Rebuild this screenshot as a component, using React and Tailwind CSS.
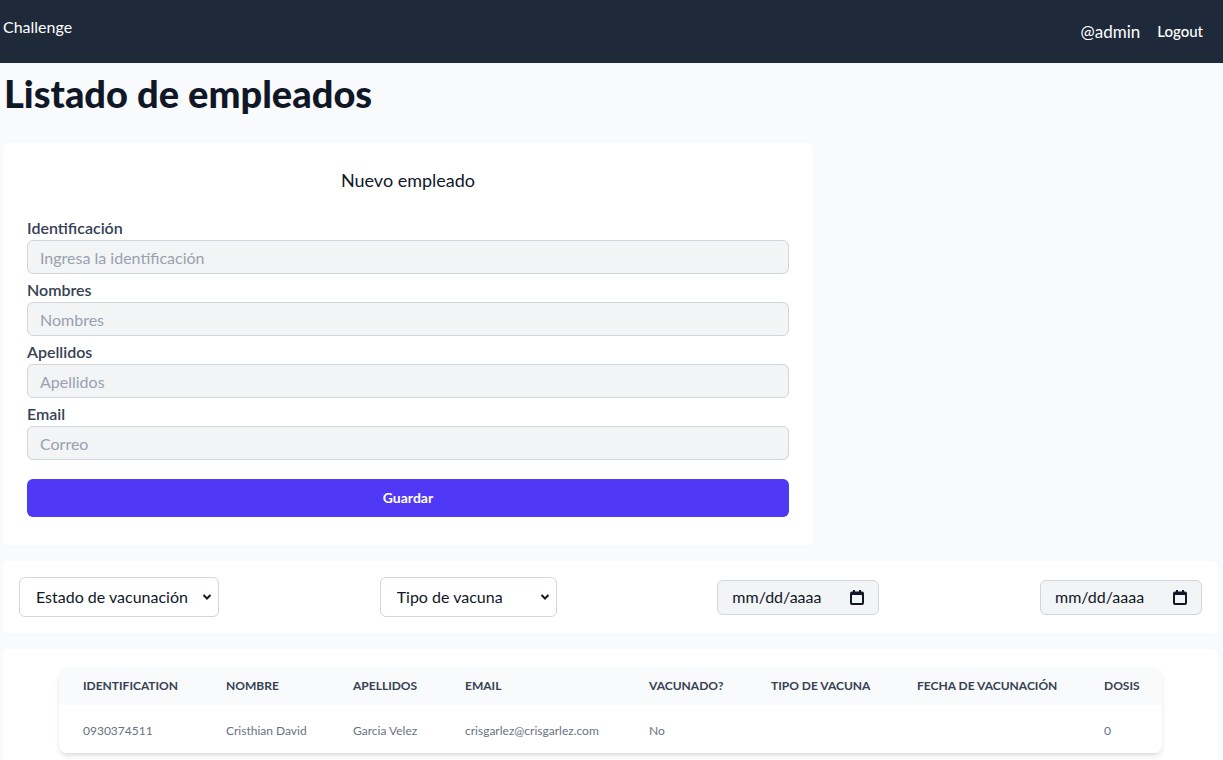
import { useState } from 'react';

const fields = [
  { label: 'Identificación', name: 'identificacion', placeholder: 'Ingresa la identificación' },
  { label: 'Nombres',        name: 'nombres',        placeholder: 'Nombres' },
  { label: 'Apellidos',      name: 'apellidos',      placeholder: 'Apellidos' },
  { label: 'Email',          name: 'email',          placeholder: 'Correo' },
];

const columns = [
  { title: 'Identification',       w: 'w-[143px]' },
  { title: 'Nombre',               w: 'w-[127px]' },
  { title: 'Apellidos',            w: 'w-[112px]' },
  { title: 'Email',                w: 'w-[184px]' },
  { title: 'Vacunado?',            w: 'w-[122px]' },
  { title: 'Tipo de vacuna',       w: 'w-[146px]' },
  { title: 'Fecha de vacunación',  w: 'w-[187px]' },
  { title: 'Dosis',                w: 'w-[82px]' },
];

const employees = [
  ['0930374511', 'Cristhian David', 'Garcia Velez', 'crisgarlez@crisgarlez.com', 'No', '', '', '0'],
];

function CalendarIcon() {
  return (
    <svg width="14" height="15" viewBox="0 0 14 15" className="text-gray-900">
      <rect x="1" y="2.5" width="12" height="11.5" rx="1" fill="none" stroke="currentColor" strokeWidth="2" />
      <rect x="1" y="2" width="12" height="3" fill="currentColor" />
      <rect x="3" y="0" width="2" height="3" fill="currentColor" />
      <rect x="9" y="0" width="2" height="3" fill="currentColor" />
    </svg>
  );
}

function DateField() {
  return (
    <div className="w-[162px] h-[35px] flex items-center justify-between pl-[14px] pr-[14px] bg-gray-100 border border-gray-300 rounded-md text-base text-gray-900">
      <span>mm/dd/aaaa</span>
      <CalendarIcon />
    </div>
  );
}

function Chevron() {
  return (
    <svg width="10" height="7" viewBox="0 0 10 7" className="absolute right-[7px] top-1/2 -translate-y-1/2 pointer-events-none">
      <path d="M1.5 1.5 L5 5 L8.5 1.5" fill="none" stroke="#111827" strokeWidth="2" />
    </svg>
  );
}

export default function App() {
  const [form, setForm] = useState({ identificacion: '', nombres: '', apellidos: '', email: '' });
  const handleChange = e => setForm(f => ({ ...f, [e.target.name]: e.target.value }));

  return (
    <div className="min-h-screen bg-gray-50 text-gray-900" style={{ fontFamily: 'Lato, "Noto Sans", sans-serif' }}>
      <nav className="h-[63px] bg-gray-800 flex justify-between pl-[3px] pr-[20px] text-white">
        <span className="pt-[15px] text-base">Challenge</span>
        <div className="flex items-center gap-[17px]">
          <span className="text-[17px]">@admin</span>
          <button className="text-[15px] font-medium">Logout</button>
        </div>
      </nav>

      <main className="pl-[3px] pr-[5px]">
        <h1 className="pl-px pt-[10px] pb-[30px] text-[38px] leading-10 font-black text-gray-900">Listado de empleados</h1>

        <form className="w-[810px] bg-white rounded-md px-6 pt-[23px] pb-[28px]" onSubmit={e => e.preventDefault()}>
          <h2 className="text-center text-lg leading-7 text-gray-900 mb-[22px]">Nuevo empleado</h2>
          {fields.map(f => (
            <div key={f.name} className="mb-1">
              <label className="block text-base leading-6 font-semibold text-gray-700">{f.label}</label>
              <input
                name={f.name} value={form[f.name]} onChange={handleChange} placeholder={f.placeholder}
                className="w-full h-[34px] px-3 bg-gray-100 border border-gray-300 rounded-md text-base placeholder:text-gray-400 focus:outline-none"
              />
            </div>
          ))}
          <button type="submit" className="w-full h-[38px] mt-[15px] bg-indigo-600 rounded-md text-sm font-bold text-white">
            Guardar
          </button>
        </form>

        <div className="mt-4 bg-white rounded-md h-[72px] px-4 flex items-center justify-between">
          <div className="relative">
            <select className="w-[200px] h-[40px] pl-4 pr-6 border border-gray-300 rounded-md bg-white text-base appearance-none">
              <option>Estado de vacunación</option>
            </select>
            <Chevron />
          </div>
          <div className="relative">
            <select className="w-[177px] h-[40px] pl-4 pr-6 border border-gray-300 rounded-md bg-white text-base appearance-none">
              <option>Tipo de vacuna</option>
            </select>
            <Chevron />
          </div>
          <DateField />
          <DateField />
        </div>

        <div className="mt-4 bg-white rounded-t-md px-14 pt-[18px] pb-[8px]">
          <div className="rounded-lg shadow-md overflow-hidden">
            <table className="w-full table-fixed text-left text-xs">
              <thead className="bg-gray-50">
                <tr>
                  {columns.map(c => (
                    <th key={c.title} className={`${c.w} h-[38px] pl-6 font-bold uppercase text-gray-700 whitespace-nowrap`}>{c.title}</th>
                  ))}
                </tr>
              </thead>
              <tbody className="bg-white">
                {employees.map(row => (
                  <tr key={row[0]}>
                    {row.map((cell, i) => (
                      <td key={i} className="h-[48px] pl-6 pt-[3px] text-gray-500 whitespace-nowrap">{cell}</td>
                    ))}
                  </tr>
                ))}
              </tbody>
            </table>
          </div>
        </div>
      </main>
    </div>
  );
}
